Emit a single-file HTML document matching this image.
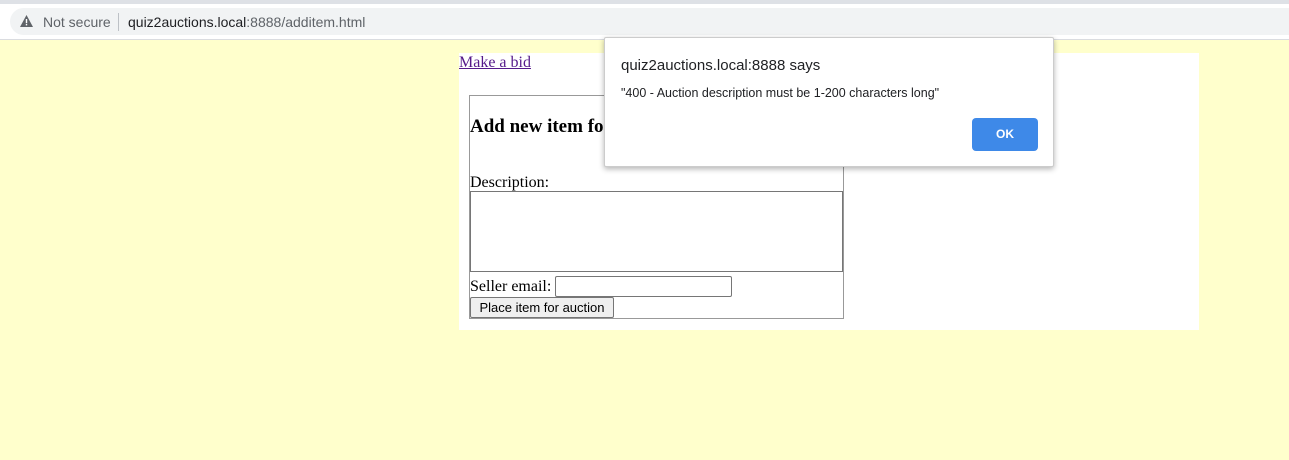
<!DOCTYPE html>
<html><head><style>
*{margin:0;padding:0;box-sizing:border-box}
body{width:1289px;height:460px;background:#ffffcc;position:relative;overflow:hidden;font-family:"Liberation Serif",serif}
.abs{position:absolute}
.sans{font-family:"Liberation Sans",sans-serif}
</style></head><body>
<div class="abs" style="left:0;top:0;width:1289px;height:4px;background:#dee1e6"></div>
<div class="abs" style="left:0;top:4px;width:1289px;height:36px;background:#fff;border-bottom:1px solid #dadce0"></div>
<div class="abs" style="left:10px;top:8px;width:1300px;height:27px;background:#f1f3f4;border-radius:14px"></div>
<svg class="abs" style="left:19px;top:14px" width="15" height="14" viewBox="0 0 15 14"><path d="M7.5 1L14 13H1Z" fill="#5f6368"/><rect x="6.8" y="5" width="1.4" height="4.2" fill="#fff"/><rect x="6.8" y="10" width="1.4" height="1.4" fill="#fff"/></svg>
<div class="abs sans" style="left:43px;top:14px;font-size:14px;color:#5f6368">Not secure</div>
<div class="abs" style="left:118px;top:13px;width:1px;height:18px;background:#bdc1c6"></div>
<div class="abs sans" style="left:128px;top:14px;font-size:14px;color:#202124">quiz2auctions.local<span style="color:#5f6368">:8888/additem.html</span></div>

<div class="abs" style="left:459px;top:53px;width:740px;height:277px;background:#fff"></div>
<a class="abs" style="left:459px;top:54px;font-size:16px;color:#551a8b;text-decoration:underline">Make a bid</a>
<div class="abs" style="left:469px;top:95px;width:375px;height:224px;border:1px solid #999"></div>
<div class="abs" style="left:470px;top:116px;font-size:19px;font-weight:bold">Add new item for auction</div>
<div class="abs" style="left:470px;top:174px;font-size:16px">Description:</div>
<div class="abs" style="left:470px;top:191px;width:373px;height:81px;border:1px solid #767676;background:#fff"></div>
<div class="abs" style="left:470px;top:278px;font-size:16px">Seller email:</div>
<div class="abs" style="left:555px;top:276px;width:177px;height:21px;border:1px solid #767676;border-radius:2px;background:#fff"></div>
<div class="abs sans" style="left:470px;top:297px;width:144px;height:21px;border:1px solid #767676;border-radius:2px;background:#efefef;font-size:13px;line-height:19px;text-align:center">Place item for auction</div>

<div class="abs" style="left:604px;top:37px;width:450px;height:130px;background:#fff;border:1px solid #ccc;border-radius:2px;box-shadow:0 2px 6px rgba(0,0,0,.3)"></div>
<div class="abs sans" style="left:621px;top:57px;font-size:15px;color:#202124">quiz2auctions.local:8888 says</div>
<div class="abs sans" style="left:621px;top:86px;font-size:12.5px;color:#202124">"400 - Auction description must be 1-200 characters long"</div>
<div class="abs sans" style="left:972px;top:118px;width:66px;height:33px;background:#3e89e8;border-radius:4px;color:#fff;font-size:12px;font-weight:bold;text-align:center;line-height:33px">OK</div>
</body></html>
